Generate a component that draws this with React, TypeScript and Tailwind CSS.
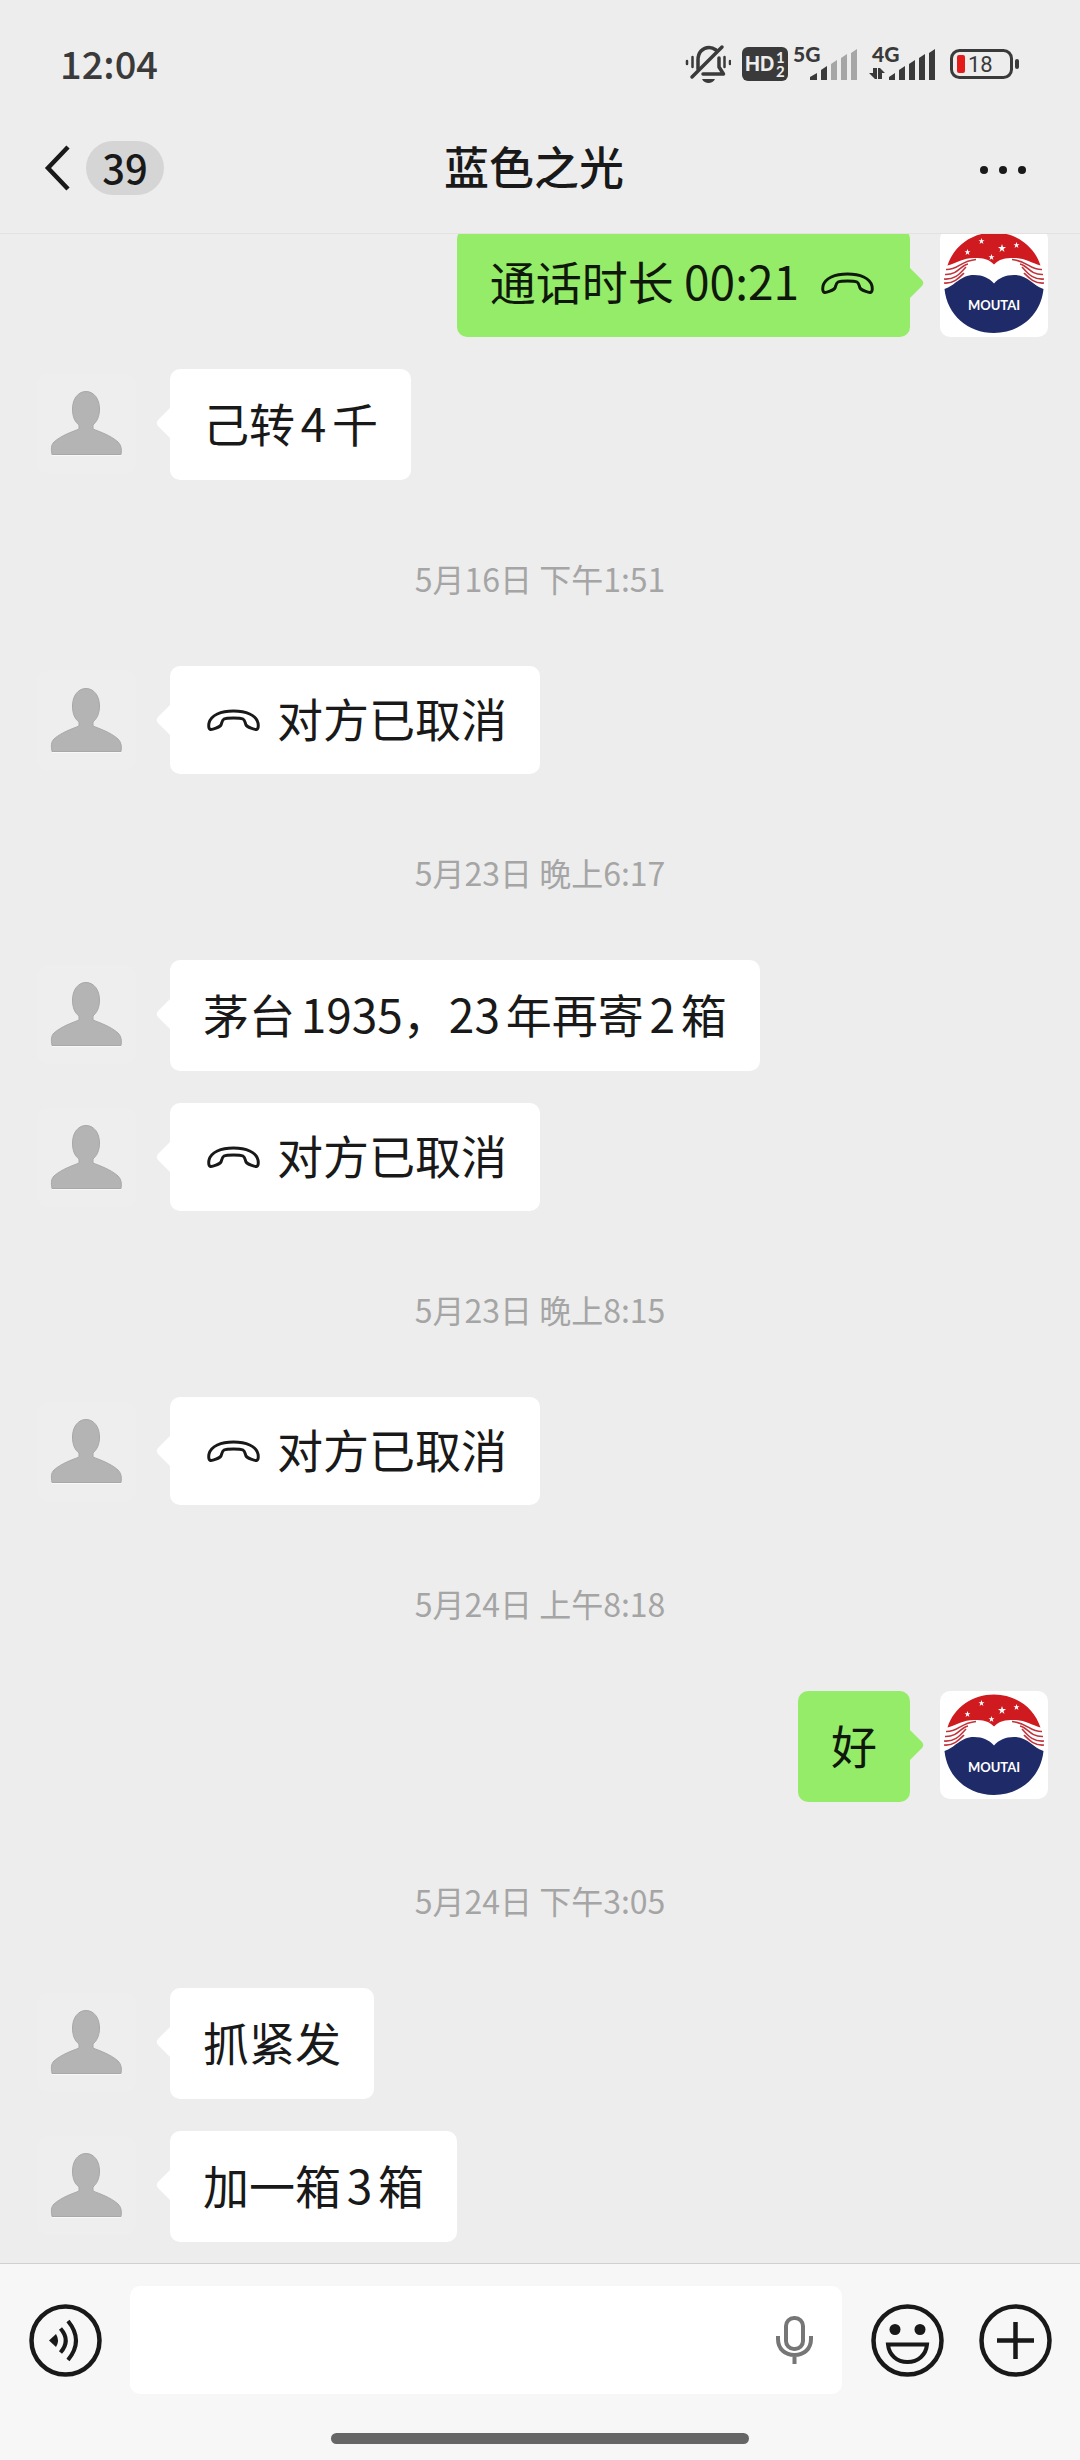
import type { ReactNode } from 'react';

type Message = {
  kind: 'text' | 'call' | 'time';
  text: string;
  mine?: boolean;
};

const messages: Message[] = [
  { kind: 'call', text: '通话时长 00:21', mine: true },
  { kind: 'text', text: '己转4千' },
  { kind: 'time', text: '5月16日 下午1:51' },
  { kind: 'call', text: '对方已取消' },
  { kind: 'time', text: '5月23日 晚上6:17' },
  { kind: 'text', text: '茅台1935，23年再寄2箱' },
  { kind: 'call', text: '对方已取消' },
  { kind: 'time', text: '5月23日 晚上8:15' },
  { kind: 'call', text: '对方已取消' },
  { kind: 'time', text: '5月24日 上午8:18' },
  { kind: 'text', text: '好', mine: true },
  { kind: 'time', text: '5月24日 下午3:05' },
  { kind: 'text', text: '抓紧发' },
  { kind: 'text', text: '加一箱3箱' },
];

function StatusIcons() {
  return (
    <div className="flex items-center text-[#3a3a3a]">
      {/* Muted bell */}
      <svg width="46" height="40" viewBox="0 0 46 40" fill="none" stroke="currentColor" strokeWidth="3.5" strokeLinecap="round">
        <path d="M13 25V16C13 8 18 3.500 24 3.500C27 3.500 29 4.500 31 6" />
        <path d="M34 14V23L38.500 30H18" strokeLinejoin="round" />
        <path d="M7 33L37 3" />
        <path d="M17 35H30C29 37.500 26 39 23.500 39S18 37.500 17 35Z" fill="currentColor" stroke="none" />
        <path d="M2 17V20M7.500 13V23M39.500 13V23M45 17V20" strokeWidth="2.500" />
      </svg>
      {/* HD voice on both SIMs */}
      <svg className="ml-[11px]" width="46" height="34" viewBox="0 0 46 34">
        <rect width="46" height="34" rx="6" fill="currentColor" />
        <text x="3" y="24" fontSize="20" fontWeight="700" fill="#ededed" fontFamily="Inter, sans-serif">HD</text>
        <text x="34" y="16" fontSize="15" fontWeight="700" fill="#ededed" fontFamily="Lato, sans-serif">1</text>
        <text x="34" y="30" fontSize="15" fontWeight="700" fill="#ededed" fontFamily="Lato, sans-serif">2</text>
      </svg>
      <svg className="ml-[5px]" width="66" height="48" viewBox="0 -6 66 48" fill="currentColor">
        <text x="0" y="16" fontSize="21" fontWeight="900" fontFamily="Lato, sans-serif">5G</text>
        <path d="M17 34V31L24 27V34Z" />
        <path d="M28 34V24L34 20V34Z" />
        <path d="M38 34V18L44 14V34ZM48 34V12L54 8V34ZM58 34V7L64 3V34Z" fill="#a6a6a6" />
      </svg>
      <svg className="ml-[10px]" width="68" height="48" viewBox="0 -6 68 48" fill="currentColor">
        <text x="3" y="16" fontSize="21" fontWeight="900" fontFamily="Lato, sans-serif">4G</text>
        <path d="M4 22H8V33H6L0 27H4ZM9 22H11L16 27H13V33H9Z" />
        <path d="M20 34V31L26 27V34ZM30 34V24L36 20V34ZM40 34V18L46 14V34ZM50 34V12L56 8V34ZM60 34V7L66 3V34Z" />
      </svg>
      <svg className="ml-[13px]" width="70" height="32" viewBox="0 0 70 32">
        <rect x="1.500" y="2.500" width="60" height="27" rx="8" fill="none" stroke="currentColor" strokeWidth="3" />
        <rect x="65" y="11" width="4" height="10" rx="2" fill="currentColor" />
        <rect x="7" y="7" width="8" height="18" rx="2" fill="#e31b1b" />
        <text x="18" y="24" fontSize="22" fill="currentColor" fontFamily="Roboto, sans-serif">18</text>
      </svg>
    </div>
  );
}

function HangUpIcon() {
  return (
    <svg className="shrink-0" width="60" height="30" viewBox="0 0 60 30" fill="none" stroke="currentColor" strokeWidth="3" strokeLinejoin="round">
      <path d="M30.500 6C18 6 8 10 6 18C5.500 21 6 24 7.500 24.500C9 25 17 22 18 20C19 17.500 19 15 21 14C24 12.500 37 12.500 40 14C42 15 42 17.500 43 20C44 22 52 25 53.500 24.500C55 24 55.500 21 55 18C53 10 43 6 30.500 6Z" />
    </svg>
  );
}

function ContactAvatar() {
  return (
    <div className="flex size-[108px] shrink-0 items-center justify-center">
      <svg width="99" height="99" viewBox="0 0 99 99">
        <rect width="99" height="99" rx="10" fill="#eeeeee" />
        <path
          d="M49 17.500C57 17.500 62.500 25 62.500 35C62.500 43 59.500 48 56 51V55C63 58 73 61 81 68C84 71 85 75 84 80.500H15C14 75 14 71 17 68C25 61 35 58 42 55V51C38 48 35.500 43 35.500 35C35.500 25 41 17.500 49 17.500Z"
          fill="#b4b4b4"
          stroke="#a8a8a8"
        />
        <path d="M15 81.500H84" stroke="#f8f8f8" />
      </svg>
    </div>
  );
}

function MoutaiAvatar() {
  return (
    <svg className="size-[108px] shrink-0 rounded-[10px] bg-white" viewBox="0 0 108 108">
      <path d="M7.500 36.500C14 16 33 3.500 54 3.500S94 16 100.500 36.500C91 34 85 29 74 29C65 29 59 30 54 35.500C49 30 43 29 34 29C23 29 17 34 7.500 36.500Z" fill="#cf1a1f" />
      <path d="M4.500 60C15 57 20 46 34 46C43 46 49 49 54 54.500C59 49 65 46 74 46C88 46 93 57 103.500 60C101 86 80 104 54 104S7 86 4.500 60Z" fill="#1f2b68" />
      <g fill="none" stroke="#c2323a" strokeWidth="1.600">
        <path d="M6 40.500C18 41 20 32 36 30.500M5 45.500C18 46 21 36 28 35M4 50C16 51 21 43 26 38M4 54C14 55 20 48 24 44" />
        <path d="M102 40.500C90 41 88 32 72 30.500M103 45.500C90 46 87 36 80 35M104 50C92 51 87 43 82 38M104 54C94 55 88 48 84 44" />
      </g>
      <g fill="#ffffff">
        <path d="M62 15L63 18H66L63.500 20L64.500 23L62 21L59.500 23L60.500 20L58 18H61Z" />
        <path d="M41.500 9L42.300 11.200H44.500L42.700 12.600L43.400 15L41.500 13.500L39.600 15L40.300 12.600L38.500 11.200H40.700Z" />
        <path d="M76.500 13L77.300 15.200H79.500L77.700 16.600L78.400 19L76.500 17.500L74.600 19L75.300 16.600L73.500 15.200H75.700Z" />
        <path d="M27.500 20L28.300 22.200H30.500L28.700 23.600L29.400 26L27.500 24.500L25.600 26L26.300 23.600L24.500 22.200H26.700Z" />
        <path d="M51.500 25L52.300 27.200H54.500L52.700 28.600L53.400 31L51.500 29.500L49.600 31L50.300 28.600L48.500 27.200H50.700Z" />
      </g>
      <text x="54" y="80.500" textAnchor="middle" fontSize="13" fontWeight="700" fill="#ffffff" fontFamily="Lato, sans-serif">
        MOUTAI
      </text>
    </svg>
  );
}

function Bubble({ message }: { message: Message }) {
  const { kind, text, mine } = message;
  const isCall = kind === 'call';
  return (
    <div
      className={`relative flex items-center rounded-[10px] px-[33px] text-[46px] leading-[64px] whitespace-nowrap [text-autospace:normal] ${
        isCall ? 'h-[108px]' : 'h-[111px]'
      } ${mine ? 'bg-[#95ec69] text-[#0f180b]' : 'bg-white text-[#191919]'} ${
        isCall && mine ? 'flex-row-reverse gap-[18px]' : 'gap-[14px]'
      }`}
    >
      {mine ? (
        <svg className="absolute top-[39px] left-full" width="14" height="30" viewBox="0 0 14 30" fill="#95ec69">
          <path d="M0 0L12 12Q14.500 15 12 18L0 30Z" />
        </svg>
      ) : (
        <svg className="absolute top-[39px] right-full" width="14" height="30" viewBox="0 0 14 30" fill="#ffffff">
          <path d="M14 0L2 12Q-0.500 15 2 18L14 30Z" />
        </svg>
      )}
      {isCall && <HangUpIcon />}
      <span className="pb-[6px]">{text}</span>
    </div>
  );
}

function MessageRow({ message }: { message: Message }) {
  return (
    <div className={`flex items-start gap-[30px] ${message.mine ? 'flex-row-reverse' : ''}`}>
      {message.mine ? <MoutaiAvatar /> : <ContactAvatar />}
      <Bubble message={message} />
    </div>
  );
}

function IconButton({ label, children }: { label: string; children: ReactNode }) {
  return (
    <button type="button" aria-label={label} className="shrink-0 text-[#191919]">
      <svg width="73" height="73" viewBox="0 0 73 73" fill="none" stroke="currentColor" strokeWidth="4.500">
        <circle cx="36.500" cy="36.500" r="34" />
        {children}
      </svg>
    </button>
  );
}

export default function App() {
  return (
    <div className="flex h-screen flex-col bg-[#ededed] font-['Noto_Sans_CJK_SC',sans-serif] text-[#191919]">
      <header className="shrink-0 border-b border-[#e2e2e2]">
        <div className="flex h-[102px] items-center justify-between pt-[26px] pr-[60px] pl-[60px]">
          <span className="pb-[2px] text-[38px] leading-[48px] font-medium text-[#3a3a3a]">12:04</span>
          <StatusIcons />
        </div>
        <div className="grid h-[131px] grid-cols-[1fr_auto_1fr] items-center">
          <button type="button" aria-label="返回" className="flex items-center gap-4 pl-11">
            <svg width="26" height="48" viewBox="0 0 26 48" fill="none" stroke="currentColor" strokeWidth="4.500">
              <path d="M24 3L4 24L24 45" />
            </svg>
            <span className="flex h-[54px] w-[78px] items-center justify-center rounded-full bg-[#d5d5d5] pb-[2px] text-[40px] leading-[52px] font-medium">
              39
            </span>
          </button>
          <h1 className="pr-3 pb-[4px] text-[45px] leading-[64px] font-medium">蓝色之光</h1>
          <button type="button" aria-label="更多" className="justify-self-end pt-1 pr-[51px]">
            <svg width="52" height="12" viewBox="0 0 52 12" fill="currentColor">
              <circle cx="7" cy="6" r="4" />
              <circle cx="26" cy="6" r="4" />
              <circle cx="45" cy="6" r="4" />
            </svg>
          </button>
        </div>
      </header>

      <main className="flex min-h-0 flex-1 flex-col justify-end overflow-hidden px-8 pb-[21px]">
        <ul>
          {messages.map((message, i) => {
            if (message.kind === 'time') {
              return (
                <li key={i} className="pt-[78px] pb-[68px] text-center text-[32px] leading-10 text-[#a5a5a5]">
                  {message.text}
                </li>
              );
            }
            const followsMessage = i > 0 && messages[i - 1].kind !== 'time';
            return (
              <li key={i} className={followsMessage ? 'pt-8' : ''}>
                <MessageRow message={message} />
              </li>
            );
          })}
        </ul>
      </main>

      <footer className="shrink-0 border-t border-[#d0d0d0] bg-[#f7f7f7] pt-[22px] pb-4">
        <div className="flex items-center pr-7 pl-[29px]">
          <IconButton label="语音">
            <path d="M20 36.500L27 30Q31 36.500 27 43Z" fill="currentColor" stroke="none" />
            <path d="M31.500 24.500Q42 36.500 31.500 48.500M39 17Q55 36.500 39 56" strokeWidth="4" />
          </IconButton>
          <div className="mr-[29px] ml-7 flex h-[108px] min-w-0 flex-1 items-center rounded-[10px] bg-white pr-[27px]">
            <input type="text" aria-label="消息" className="h-full min-w-0 flex-1 bg-transparent pl-6 text-[46px] outline-none" />
            <button type="button" aria-label="语音输入" className="text-[#767676]">
              <svg width="42" height="50" viewBox="0 0 42 50" fill="none" stroke="currentColor" strokeWidth="4">
                <rect x="13" y="3" width="17" height="31" rx="8" />
                <path d="M5 21V24C5 34 12 40 21.500 40S38 34 38 24V21M21.500 40V49" />
              </svg>
            </button>
          </div>
          <IconButton label="表情">
            <circle cx="24" cy="25.500" r="5.500" fill="currentColor" stroke="none" />
            <circle cx="49" cy="25.500" r="5.500" fill="currentColor" stroke="none" />
            <path d="M17 40.500H56C55 51 47 58 36.500 58S18 51 17 40.500Z" strokeWidth="4" />
          </IconButton>
          <div className="ml-[35px] flex">
            <IconButton label="更多功能">
              <path d="M18 36.500H55M36.500 18V55" />
            </IconButton>
          </div>
        </div>
        <div className="mx-auto mt-[39px] h-[11px] w-[418px] rounded-full bg-[#666666]" />
      </footer>
    </div>
  );
}
